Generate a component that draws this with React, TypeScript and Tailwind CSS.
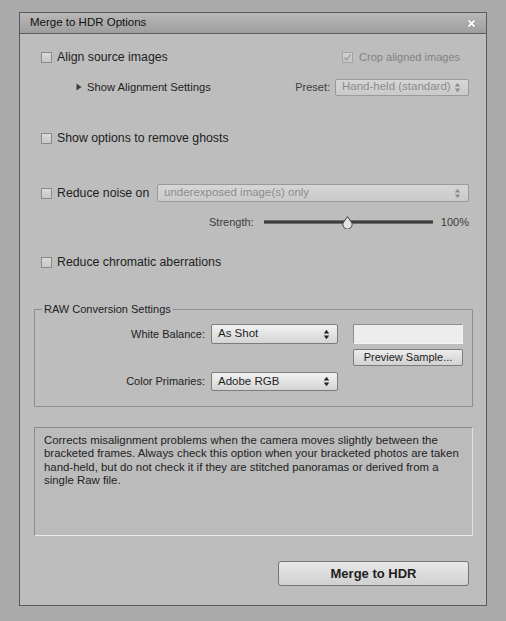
import React from "react";

const font = { fontFamily: '"Liberation Sans", Arial, sans-serif' };

function Checkbox({ checked = false, disabled = false }: { checked?: boolean; disabled?: boolean }) {
  return (
    <span
      className={`flex h-[11px] w-[11px] shrink-0 items-center justify-center border bg-linear-to-b ${
        disabled ? "border-[#a2a2a2] from-[#d2d2d2] to-[#c6c6c6]" : "border-[#8a8a8a] from-[#dadada] to-[#c8c8c8]"
      }`}
    >
      {checked && (
        <svg width="9" height="9" viewBox="0 0 9 9">
          <path d="M1.5 4.5 L3.6 6.8 L7.6 1.6" fill="none" stroke={disabled ? "#9a9a9a" : "#333"} strokeWidth="1.3" />
        </svg>
      )}
    </span>
  );
}

function Arrows({ color = "#222" }: { color?: string }) {
  return (
    <svg width="7" height="11" viewBox="0 0 7 11" className="shrink-0">
      <path d="M3.5 0.8 L6.2 4.4 H0.8 Z" fill={color} />
      <path d="M0.8 6.6 H6.2 L3.5 10.2 Z" fill={color} />
    </svg>
  );
}

function Select({
  value,
  className,
  disabled = false,
}: {
  value: string;
  className: string;
  disabled?: boolean;
}) {
  return (
    <div
      className={`flex items-center justify-between rounded-[2px] border bg-linear-to-b pl-[6px] pr-[7px] text-[11.5px] ${
        disabled
          ? "border-[#9a9a9a] from-[#d6d6d6] to-[#cacaca] text-[#8c8c8c]"
          : "border-[#7c7c7c] from-[#f2f2f2] to-[#d4d4d4] text-[#1e1e1e]"
      } ${className}`}
    >
      <span className="whitespace-nowrap">{value}</span>
      <Arrows color={disabled ? "#8c8c8c" : "#222"} />
    </div>
  );
}

function Slider() {
  return (
    <div className="relative flex h-[14px] w-[169px] items-center">
      <div className="h-[4px] w-full border-y border-[#6e6e6e] bg-[#3e3e3e]" />
      <svg width="11" height="13" viewBox="0 0 11 13" className="absolute left-[78px] top-[1px]">
        <path d="M5.5 0.7 L9.6 6.4 A4.6 4.6 0 1 1 1.4 6.4 Z" fill="#e4e4e4" stroke="#3a3a3a" strokeWidth="1" />
      </svg>
    </div>
  );
}

export default function App() {
  return (
    <div className="h-[621px] w-[506px] overflow-hidden bg-[#aaaaaa] pl-[19px] pt-[12px] text-[#1e1e1e]" style={font}>
      <div className="flex h-[594px] w-[468px] flex-col border border-[#5a5a5a] bg-[#bdbdbd]">
        {/* title bar */}
        <div className="flex h-[21px] shrink-0 items-center justify-between border-b border-[#5e5e5e] bg-linear-to-b from-[#b8b8b8] to-[#9e9e9e] pl-[10px] pr-[10px]">
          <span className="text-[11.5px] text-[#111]">Merge to HDR Options</span>
          <svg width="9" height="9" viewBox="0 0 9 9">
            <path d="M1.5 1.5 L7.5 7.5 M7.5 1.5 L1.5 7.5" stroke="#8a8a8a" strokeWidth="3" />
            <path d="M1.5 1.5 L7.5 7.5 M7.5 1.5 L1.5 7.5" stroke="#ffffff" strokeWidth="1.8" />
          </svg>
        </div>

        <div className="flex flex-col px-[14px]">
          {/* align */}
          <div className="mt-[13px] flex h-[20px] items-center pl-[7px] pr-[12px]">
            <Checkbox />
            <span className="ml-[5px] text-[12.3px]">Align source images</span>
            <div className="ml-auto flex items-center">
              <Checkbox checked disabled />
              <span className="ml-[6px] text-[11px] text-[#828282]">Crop aligned images</span>
            </div>
          </div>

          <div className="mt-[10px] flex h-[20px] items-center pl-[42px] pr-[3px]">
            <svg width="6" height="8" viewBox="0 0 6 8">
              <path d="M0.5 0.5 L5.5 4 L0.5 7.5 Z" fill="#3c3c3c" />
            </svg>
            <span className="ml-[5px] text-[11.2px]">Show Alignment Settings</span>
            <span className="ml-auto mr-[5px] text-[11px] text-[#3c3c3c]">Preset:</span>
            <Select value="Hand-held (standard)" disabled className="h-[17px] w-[134px]" />
          </div>

          {/* ghosts */}
          <div className="mt-[31px] flex h-[20px] items-center pl-[7px]">
            <Checkbox />
            <span className="ml-[5px] text-[12.3px]">Show options to remove ghosts</span>
          </div>

          {/* noise */}
          <div className="mt-[35px] flex h-[20px] items-center pl-[7px] pr-[3px]">
            <Checkbox />
            <span className="ml-[5px] text-[12.3px]">Reduce noise on</span>
            <Select value="underexposed image(s) only" disabled className="ml-auto h-[18px] w-[312px]" />
          </div>

          <div className="mt-[9px] flex h-[20px] items-center pl-[175px] pr-[3px]">
            <span className="text-[11px] text-[#3c3c3c]">Strength:</span>
            <div className="ml-[10px]">
              <Slider />
            </div>
            <span className="ml-auto text-[11px] text-[#3c3c3c]">100%</span>
          </div>

          {/* chromatic */}
          <div className="mt-[20px] flex h-[20px] items-center pl-[7px]">
            <Checkbox />
            <span className="ml-[5px] text-[12.3px]">Reduce chromatic aberrations</span>
          </div>

          {/* raw conversion */}
          <fieldset className="mt-[30px] h-[105px] w-[439px] border border-[#8e8e8e]">
            <legend className="ml-[7px] px-[2px] text-[11px] leading-[14px] text-[#222]">RAW Conversion Settings</legend>
            <div className="mt-[8px] flex">
              <div className="flex flex-col">
                <div className="flex h-[20px] items-center">
                  <span className="w-[170px] text-right text-[11px] text-[#222]">White Balance:</span>
                  <Select value="As Shot" className="ml-[6px] h-[20px] w-[127px]" />
                </div>
                <div className="mt-[28px] flex h-[19px] items-center">
                  <span className="w-[170px] text-right text-[11px] text-[#222]">Color Primaries:</span>
                  <Select value="Adobe RGB" className="ml-[6px] h-[19px] w-[127px]" />
                </div>
              </div>
              <div className="ml-[15px] flex flex-col">
                <div className="h-[20px] w-[110px] border border-t-[#8e8e8e] border-l-[#8e8e8e] border-r-[#f4f4f4] border-b-[#f4f4f4] bg-[#ededed]" />
                <button className="mt-[5px] flex h-[17px] w-[110px] items-center justify-center rounded-[2px] border border-[#7c7c7c] bg-linear-to-b from-[#ececec] to-[#d2d2d2] text-[11px] text-[#222]">
                  Preview Sample...
                </button>
              </div>
            </div>
          </fieldset>

          {/* description */}
          <div className="mt-[20px] h-[109px] w-[439px] border border-t-[#8a8a8a] border-l-[#8a8a8a] border-r-[#e2e2e2] border-b-[#eaeaea] bg-[#bbbbbb] pl-[9px] pt-[6px] text-[11.4px] leading-[13.4px] text-[#222]">
            <div className="whitespace-nowrap">Corrects misalignment problems when the camera moves slightly between the</div>
            <div className="whitespace-nowrap">bracketed frames. Always check this option when your bracketed photos are taken</div>
            <div className="whitespace-nowrap">hand-held, but do not check it if they are stitched panoramas or derived from a</div>
            <div className="whitespace-nowrap">single Raw file.</div>
          </div>

          <div className="mt-[25px] flex justify-end pr-[3px]">
            <button className="flex h-[25px] w-[191px] items-center justify-center rounded-[3px] border border-[#747474] bg-linear-to-b from-[#e8e8e8] to-[#d0d0d0] text-[13px] font-bold text-[#1e1e1e]">
              Merge to HDR
            </button>
          </div>
        </div>
      </div>
    </div>
  );
}
